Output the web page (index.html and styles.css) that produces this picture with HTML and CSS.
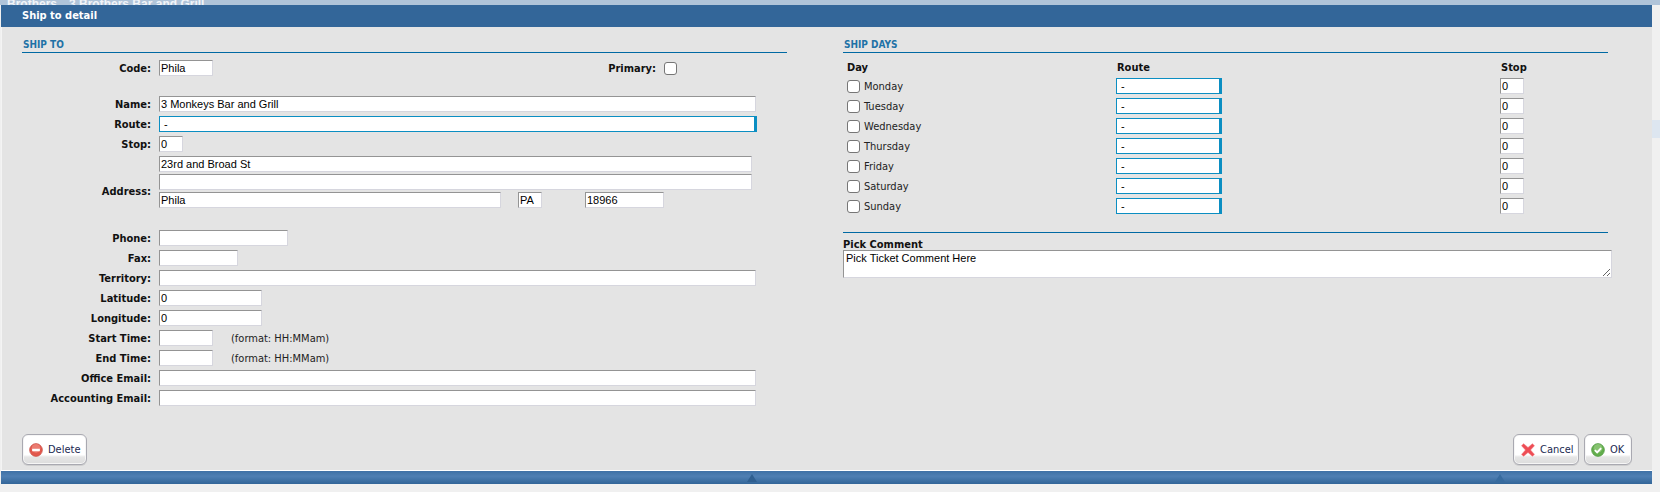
FILE: index.html
```html
<!DOCTYPE html>
<html lang="en">
<head>
<meta charset="utf-8">
<title>Ship to detail</title>
<link rel="stylesheet" href="styles.css">
</head>
<body>
<div class="backdrop"><span class="b1">Brothers</span><span class="b2">3 Brothers Bar and Grill</span></div>
<div class="side-row"></div>
<main class="dialog">
  <header class="titlebar">Ship to detail</header>
  <div class="body">
    <div class="columns">
      <section class="col">
        <h2 class="section">SHIP TO</h2>
        <div class="row row-code">
          <label class="lbl">Code:</label>
          <input class="in w54" value="Phila">
          <label class="lbl primary">Primary:</label>
          <span class="check"></span>
        </div>
        <div class="row gap-a"><label class="lbl">Name:</label><input class="in w597" value="3 Monkeys Bar and Grill"></div>
        <div class="row"><label class="lbl">Route:</label><div class="sel w598">-</div></div>
        <div class="row"><label class="lbl">Stop:</label><input class="in w24" value="0"></div>
        <div class="addr">
          <label class="lbl">Address:</label>
          <div class="addr-lines">
            <input class="in w593" value="23rd and Broad St">
            <input class="in w593" value="">
            <div class="addr-city">
              <input class="in w342" value="Phila">
              <input class="in w24 st" value="PA">
              <input class="in w79 zip" value="18966">
            </div>
          </div>
        </div>
        <div class="row gap-b"><label class="lbl">Phone:</label><input class="in w129"></div>
        <div class="row"><label class="lbl">Fax:</label><input class="in w79"></div>
        <div class="row"><label class="lbl">Territory:</label><input class="in w597"></div>
        <div class="row"><label class="lbl">Latitude:</label><input class="in w103" value="0"></div>
        <div class="row"><label class="lbl">Longitude:</label><input class="in w103" value="0"></div>
        <div class="row"><label class="lbl">Start Time:</label><input class="in w54"><span class="hint">(format: HH:MMam)</span></div>
        <div class="row"><label class="lbl">End Time:</label><input class="in w54"><span class="hint">(format: HH:MMam)</span></div>
        <div class="row"><label class="lbl">Office Email:</label><input class="in w597"></div>
        <div class="row"><label class="lbl">Accounting Email:</label><input class="in w597"></div>
      </section>
      <section class="col">
        <h2 class="section">SHIP DAYS</h2>
        <div class="days">
          <div class="dh dh-day">Day</div><div class="dh">Route</div><div class="dh">Stop</div>
          <div class="day"><span class="check"></span><span class="day-name">Monday</span></div><div class="sel w106">-</div><input class="in w24" value="0">
          <div class="day"><span class="check"></span><span class="day-name">Tuesday</span></div><div class="sel w106">-</div><input class="in w24" value="0">
          <div class="day"><span class="check"></span><span class="day-name">Wednesday</span></div><div class="sel w106">-</div><input class="in w24" value="0">
          <div class="day"><span class="check"></span><span class="day-name">Thursday</span></div><div class="sel w106">-</div><input class="in w24" value="0">
          <div class="day"><span class="check"></span><span class="day-name">Friday</span></div><div class="sel w106">-</div><input class="in w24" value="0">
          <div class="day"><span class="check"></span><span class="day-name">Saturday</span></div><div class="sel w106">-</div><input class="in w24" value="0">
          <div class="day"><span class="check"></span><span class="day-name">Sunday</span></div><div class="sel w106">-</div><input class="in w24" value="0">
        </div>
        <div class="comment-head">Pick Comment</div>
        <textarea class="comment">Pick Ticket Comment Here</textarea>
      </section>
    </div>
    <div class="actions">
      <button class="btn btn-delete" type="button">
        <svg class="ico" viewBox="0 0 16 16" aria-hidden="true"><circle cx="8" cy="8" r="7.3" fill="#e2574c" stroke="#c9554c" stroke-width=".8"/><circle cx="8" cy="6" r="5" fill="#f29a90" opacity=".55"/><rect x="3.6" y="6.6" width="8.8" height="2.8" fill="#fff"/></svg>
        Delete
      </button>
      <div class="actions-right">
        <button class="btn btn-cancel" type="button">
          <svg class="ico" viewBox="0 0 16 16" aria-hidden="true"><path d="M.6 3 3 .8 8 5.2 13 .8 15.4 3 10.9 8 15.4 13 13 15.2 8 10.8 3 15.2.6 13 5.1 8Z" fill="#ee4d55" stroke="#f2757b" stroke-width=".6"/></svg>
          Cancel
        </button>
        <button class="btn btn-ok" type="button">
          <svg class="ico" viewBox="0 0 16 16" aria-hidden="true"><circle cx="8" cy="8" r="7.3" fill="#62ad4c" stroke="#4f9a41" stroke-width=".8"/><circle cx="8" cy="6" r="5" fill="#a5d690" opacity=".55"/><path d="M4.4 8.2 7 10.7 11.6 5.8" fill="none" stroke="#fff" stroke-width="2.2"/></svg>
          OK
        </button>
      </div>
    </div>
  </div>
  <footer class="footbar"><span class="notch notch-a"></span><span class="notch notch-b"></span></footer>
</main>
</body>
</html>
```
FILE: styles.css
```css
* { box-sizing: border-box; }
html, body { margin: 0; padding: 0; }
body { width: 1660px; height: 492px; background: #f0f0f0; overflow: hidden; position: relative; font-family: "DejaVu Sans Condensed", "DejaVu Sans", sans-serif; }
.backdrop { height: 5px; background: #b0c4d9; overflow: hidden; color: #f2f5f9; font: bold 12px/9px "Liberation Sans", sans-serif; white-space: nowrap; padding-left: 7px; }
.b2 { margin-left: 12px; }
.side-row { position: absolute; left: 1652px; top: 120px; width: 8px; height: 18px; background: #dde6f0; }
.dialog { width: 1651px; margin-left: 1px; }
.titlebar { height: 22px; background: #336699; color: #fff; font: bold 11px/21px "DejaVu Sans Condensed", "DejaVu Sans", sans-serif; padding-left: 21px; }
.body { height: 443px; background: #e4e4e4; border-left: 1px solid #f4f4f4; padding: 11px 20px 0 20px; display: flex; flex-direction: column; }
.columns { display: flex; gap: 56px; height: 396px; }
.col { width: 765px; }
.section { margin: 0; height: 15px; border-bottom: 1px solid #0069a3; color: #1f72a6; font: bold 10px/14px "DejaVu Sans Condensed", "DejaVu Sans", sans-serif; padding-left: 1px; }
.row { display: flex; align-items: center; height: 20px; }
.row-code { margin-top: 5px; }
.gap-a { margin-top: 16px; }
.gap-b { margin-top: 20px; }
.lbl { width: 129px; margin-right: 8px; padding-top: 2px; text-align: right; font: bold 11px/16px "DejaVu Sans Condensed", "DejaVu Sans", sans-serif; color: #111; white-space: nowrap; flex: none; }
.in { display: block; height: 16px; padding: 0 1px; background: #fff; border: 1px solid #d6d6de; border-top-color: #949494; border-left-color: #949494; font: 11px/14px "Liberation Sans", sans-serif; color: #000; outline: 0; border-radius: 0; flex: none; }
.w24 { width: 24px; } .w54 { width: 54px; } .w79 { width: 79px; } .w103 { width: 103px; } .w129 { width: 129px; }
.w342 { width: 342px; } .w593 { width: 593px; } .w597 { width: 597px; }
.sel { height: 16px; background: #fff; border: 1px solid #0b8ec2; border-right-width: 3px; font: 11px/14px "Liberation Sans", sans-serif; padding-left: 4px; color: #000; flex: none; }
.w598 { width: 598px; } .w106 { width: 106px; }
.primary { width: 443px; margin-right: 8px; }
.check { display: inline-block; width: 13px; height: 13px; background: #fff; border: 1px solid #767676; border-radius: 3px; flex: none; }
.addr { display: flex; align-items: center; height: 54px; padding-top: 2px; }
.addr .lbl { margin-top: 18px; }
.addr-lines { display: flex; flex-direction: column; gap: 2px; }
.addr-city { display: flex; }
.st { margin-left: 17px; }
.zip { margin-left: 43px; }
.hint { margin-left: 18px; padding-top: 2px; font: 11px/16px "DejaVu Sans Condensed", "DejaVu Sans", sans-serif; color: #222; }
.days { display: grid; grid-template-columns: 273px 384px 24px; grid-template-rows: 17px repeat(7, 20px); align-items: center; margin-top: 6px; }
.dh { font: bold 11px/16px "DejaVu Sans Condensed", "DejaVu Sans", sans-serif; color: #111; padding-left: 1px; }
.dh-day { padding-left: 4px; }
.day { display: flex; align-items: center; gap: 4px; font: 11px/16px "DejaVu Sans Condensed", "DejaVu Sans", sans-serif; color: #222; padding-left: 4px; }
.day-name { padding-top: 2px; }
.comment-head { margin-top: 16px; border-top: 1px solid #0069a3; height: 18px; font: bold 11px/23px "DejaVu Sans Condensed", "DejaVu Sans", sans-serif; color: #111; }
.comment { display: block; width: 769px; height: 28px; margin: 0; padding: 1px 2px; border: 1px solid #d6d6de; border-top-color: #949494; border-left-color: #949494; font: 11px/12px "Liberation Sans", sans-serif; background: #fff; color: #000; }
.actions { display: flex; justify-content: space-between; }
.actions-right { display: flex; gap: 5px; }
.btn { display: flex; align-items: center; height: 31px; padding: 0; border: 1px solid #a9a9b1; border-radius: 6px; background: linear-gradient(#fff 0 68%, #e6e6e6 76%, #dcdcdc); box-shadow: inset 0 0 0 1px #f6f6f6, 0 1px 0 #cfcfcf; font: 11px/16px "DejaVu Sans Condensed", "DejaVu Sans", sans-serif; color: #1b2a52; }
.btn-delete { width: 65px; padding-left: 6px; gap: 5px; }
.btn-cancel { width: 66px; padding-left: 7px; gap: 5px; }
.btn-ok { width: 48px; padding-left: 6px; gap: 5px; }
.ico { width: 14px; height: 14px; flex: none; }
.footbar { position: relative; height: 14px; border-top: 1px solid #fff; background: linear-gradient(#3f71a6, #4f7fb3 40%, #336699); }
.notch { position: absolute; top: 3px; border-left: 5px solid transparent; border-right: 5px solid transparent; }
.notch-a { left: 1494px; border-bottom: 8px solid #376b9f; }
.notch-b { left: 746px; border-bottom: 8px solid #2f5f90; }
```
